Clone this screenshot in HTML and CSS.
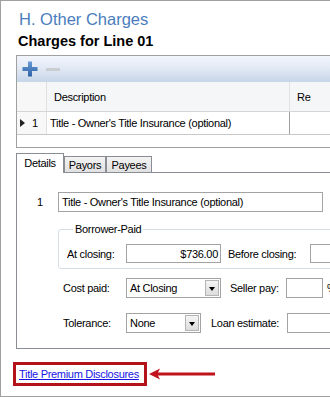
FILE: index.html
```html
<!DOCTYPE html>
<html>
<head>
<meta charset="utf-8">
<link rel="stylesheet" href="styles.css">
</head>
<body>
<div class="window">
  <h1 class="title">H. Other Charges</h1>
  <h2 class="subtitle">Charges for Line 01</h2>

  <div class="grid">
    <div class="toolbar">
      <svg class="icon-plus" width="16" height="16" viewBox="0 0 16 16">
        <defs>
          <linearGradient id="pg" x1="0" y1="0" x2="0" y2="1">
            <stop offset="0" stop-color="#6a9ad6"/>
            <stop offset="1" stop-color="#2d62a6"/>
          </linearGradient>
        </defs>
        <path d="M6 0.5h4v5.5h5.5v4H10v5.5H6V10H0.5V6H6z" fill="url(#pg)"/>
      </svg>
      <span class="icon-minus"></span>
    </div>
    <div class="grid-row header">
      <div class="cell rowhead"></div>
      <div class="cell desc">Description</div>
      <div class="cell re">Re</div>
    </div>
    <div class="grid-row data">
      <div class="cell rowhead">
        <svg class="row-marker" width="5" height="8" viewBox="0 0 5 8"><path d="M0 0L5 4L0 8z" fill="#222"/></svg>
        <span>1</span>
      </div>
      <div class="cell desc">Title - Owner's Title Insurance (optional)</div>
      <div class="cell re"></div>
    </div>
    <div class="grid-empty"></div>
  </div>

  <div class="tabs">
    <div class="tab active">Details</div>
    <div class="tab">Payors</div>
    <div class="tab">Payees</div>
  </div>
  <div class="panel">
    <div class="row row-line">
      <span class="line-no">1</span>
      <div class="field field-desc">Title - Owner's Title Insurance (optional)</div>
    </div>

    <fieldset class="group">
      <legend>Borrower-Paid</legend>
      <div class="row">
        <span class="label label-closing">At closing:</span>
        <div class="field field-amount">$736.00</div>
        <span class="label label-before">Before closing:</span>
        <div class="field field-wide"></div>
      </div>
    </fieldset>

    <div class="row row-cost">
      <span class="label label-main">Cost paid:</span>
      <div class="combo combo-cost"><span class="combo-text">At Closing</span><span class="combo-btn"></span></div>
      <span class="label label-seller">Seller pay:</span>
      <div class="field field-pct"></div>
      <span class="pct">%</span>
    </div>

    <div class="row row-tol">
      <span class="label label-main">Tolerance:</span>
      <div class="combo combo-tol"><span class="combo-text">None</span><span class="combo-btn"></span></div>
      <span class="label label-loan">Loan estimate:</span>
      <div class="field field-wide"></div>
    </div>
  </div>

  <div class="link-row">
    <div class="callout"><a href="#" class="link">Title Premium Disclosures</a></div>
    <svg class="callout-arrow" width="66" height="12" viewBox="0 0 66 12">
      <path d="M0 6L11 0.5L9 4.5H66V7.5H9L11 11.5Z" fill="#c0141c"/>
    </svg>
  </div>
</div>
</body>
</html>
```

FILE: styles.css
```css
body {
  margin: 0;
  font-family: "Liberation Sans", Arial, sans-serif;
  font-size: 11px;
  letter-spacing: -0.3px;
  color: #000;
  background: #fff;
}

.window {
  width: 330px;
  height: 397px;
  box-sizing: border-box;
  border: 1px solid #a0a0a0;
  border-right: none;
  padding-left: 15px;
  overflow: hidden;
  white-space: nowrap;
}

.title {
  margin: 0;
  padding: 8px 0 0 3px;
  font-size: 16.5px;
  line-height: 20px;
  font-weight: normal;
  letter-spacing: 0;
  color: #4a7dbd;
}

.subtitle {
  margin: 4px 0 0 2px;
  font-size: 14.5px;
  line-height: 17px;
  font-weight: bold;
  letter-spacing: 0;
}

/* grid */
.grid {
  margin-top: 5px;
  width: 340px;
  border: 1px solid #a0a0a0;
  border-right: none;
}

.toolbar {
  height: 26px;
  display: flex;
  align-items: center;
  padding-left: 5px;
  background: linear-gradient(#f2f5fc, #e3eaf5 45%, #c6d5e8);
}

.icon-minus {
  display: block;
  width: 14px;
  height: 3px;
  margin-left: 8px;
  background: #c9cdd2;
}

.grid-row {
  display: flex;
}

.grid-row.header {
  height: 29px;
  background: #f5f6f7;
  border-bottom: 1px solid #d5d5d5;
}

.grid-row.data {
  height: 22px;
  border-bottom: 1px solid #c8c8c8;
}

.cell {
  display: flex;
  align-items: center;
  box-sizing: border-box;
}

.rowhead {
  width: 30px;
  border-right: 1px solid #e0e0e0;
}

.header .rowhead {
  background: #f7f7f8;
}

.data .rowhead {
  background: #f8f8f8;
  padding-left: 3px;
}

.row-marker {
  margin-right: 7px;
}

.desc {
  width: 243px;
  padding-left: 7px;
  border-right: 1px solid #e2e2e2;
}

.data .desc {
  padding-left: 3px;
  border-right: 1px solid #a0a0a0;
}

.re {
  padding-left: 7px;
}

.grid-empty {
  height: 12px;
}

/* tabs */
.tabs {
  margin-top: 5px;
  display: flex;
  align-items: flex-end;
  height: 19px;
  position: relative;
  z-index: 1;
}

.tab {
  box-sizing: border-box;
  height: 16px;
  border: 1px solid #8a8d94;
  border-bottom: none;
  background: linear-gradient(#f3f3f3, #e1e1e1);
  display: flex;
  align-items: center;
  justify-content: center;
  padding-top: 1px;
}

.tab:nth-child(2) { width: 42px; }
.tab:nth-child(3) { width: 46px; }

.tab.active {
  width: 48px;
  height: 20px;
  margin-bottom: -1px;
  background: #fff;
  align-items: flex-start;
  padding-top: 3px;
}

.panel {
  width: 340px;
  height: 175px;
  border: 1px solid #8a8d94;
  border-right: none;
}

.row {
  display: flex;
  align-items: center;
}

.row-line {
  margin-top: 19px;
  padding-left: 20px;
}

.line-no {
  width: 21px;
}

.field {
  box-sizing: border-box;
  height: 20px;
  border: 1px solid #a3a3a3;
  background: #fff;
  display: flex;
  align-items: center;
  padding: 0 3px;
  flex-shrink: 0;
}

.field-desc {
  width: 265px;
}

/* group box */
.group {
  margin: 11px 0 0 41px;
  padding: 0 0 5px 8px;
  width: 300px;
  border: 1px solid #d5dde5;
  border-radius: 3px;
}

.group legend {
  padding: 0 2px;
  margin-left: 6px;
  line-height: 13px;
}

.group .row {
  margin-top: 8px;
}

.group .field {
  height: 19px;
}

.label-closing {
  width: 59px;
}

.field-amount {
  width: 95px;
  justify-content: flex-end;
  padding-right: 2px;
}

.label-before {
  margin-left: 7px;
  width: 82px;
}

.field-wide {
  width: 60px;
}

/* lower rows */
.row-cost {
  margin-top: 9px;
  padding-left: 46px;
}

.row-tol {
  margin-top: 15px;
  padding-left: 46px;
}

.label-main {
  width: 63px;
}

.combo {
  box-sizing: border-box;
  height: 20px;
  border: 1px solid #a3a3a3;
  display: flex;
  align-items: center;
  justify-content: space-between;
  padding: 1px 1px 1px 3px;
  flex-shrink: 0;
}

.combo-cost { width: 95px; }
.combo-tol { width: 75px; }

.combo-btn {
  align-self: stretch;
  width: 14px;
  box-sizing: border-box;
  border: 1px solid #b5b5b5;
  background: linear-gradient(#f5f5f5, #dcdcdc);
  position: relative;
}

.combo-btn::after {
  content: "";
  position: absolute;
  left: 3px;
  top: 6px;
  border-left: 3.5px solid transparent;
  border-right: 3.5px solid transparent;
  border-top: 4px solid #000;
}

.label-seller {
  margin-left: 9px;
  width: 56px;
}

.field-pct {
  width: 37px;
}

.pct {
  margin-left: 4px;
}

.label-loan {
  margin-left: 10px;
  width: 76px;
}

/* link */
.link-row {
  margin-top: 13px;
  margin-left: -3px;
  display: flex;
  align-items: center;
}

.callout {
  box-sizing: border-box;
  width: 134px;
  height: 24px;
  border: 3px solid #b3121b;
  padding-left: 3px;
  line-height: 18px;
}

.link {
  color: #1515e6;
  text-decoration: underline;
}

.callout-arrow {
  margin-left: 2px;
  display: block;
}
```
